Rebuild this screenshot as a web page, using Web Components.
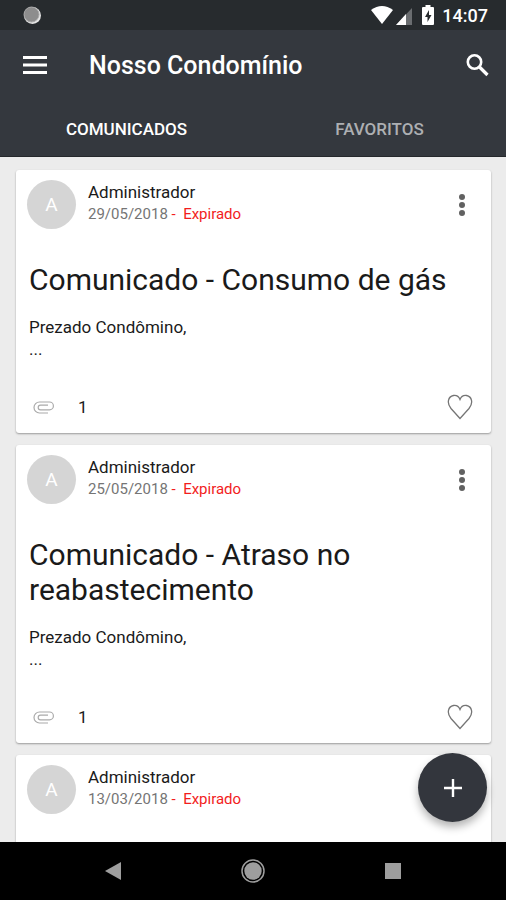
<!DOCTYPE html>
<html lang="pt-BR">
<head>
<meta charset="utf-8">
<meta name="viewport" content="width=device-width, initial-scale=1">
<title>Nosso Condomínio</title>
<style>
  body {
    margin: 0;
    height: 100vh;
    font-family: Roboto, "Liberation Sans", sans-serif;
    color: #1a1a1a;
    background: #ececec;
  }
</style>
</head>
<body>
<app-screen>
  <status-bar slot="top" data-time="14:07"></status-bar>
  <app-bar slot="top" data-header="Nosso Condomínio"></app-bar>
  <tab-bar slot="top" data-tabs="COMUNICADOS,FAVORITOS"></tab-bar>

  <notice-card data-author="Administrador" data-date="29/05/2018" data-status="Expirado" data-files="1">
    <span slot="title">Comunicado - Consumo de gás</span>
    Prezado Condômino,<br>...
  </notice-card>
  <notice-card data-author="Administrador" data-date="25/05/2018" data-status="Expirado" data-files="1">
    <span slot="title">Comunicado - Atraso no reabastecimento</span>
    Prezado Condômino,<br>...
  </notice-card>
  <notice-card data-author="Administrador" data-date="13/03/2018" data-status="Expirado"></notice-card>

  <add-button slot="action"></add-button>
  <nav-bar slot="bottom"></nav-bar>
</app-screen>

<script>
  class BaseElement extends HTMLElement {
    connectedCallback() {
      if (this.shadowRoot) {
        return;
      }

      const template = document.createElement('template');
      template.innerHTML = this.render();
      this.attachShadow({ mode: 'open' }).append(template.content.cloneNode(true));
    }
  }

  const buttonReset = `
    button {
      display: flex;
      align-items: center;
      justify-content: center;
      padding: 0;
      border: 0;
      background: none;
      color: inherit;
      font: inherit;
      cursor: pointer;
    }
    svg { display: block; }
  `;

  class AppScreen extends BaseElement {
    render() {
      return `
        <style>
          :host {
            display: flex;
            flex-direction: column;
            height: 100%;
          }
          main {
            position: relative;
            flex: 1;
            min-height: 0;
          }
          .list {
            box-sizing: border-box;
            display: flex;
            flex-direction: column;
            gap: 12px;
            height: 100%;
            padding: 13px 15px 0 16px;
            overflow: hidden;
          }
          .action {
            position: absolute;
            right: 19px;
            bottom: 20px;
          }
        </style>
        <header><slot name="top"></slot></header>
        <main>
          <div class="list"><slot></slot></div>
          <div class="action"><slot name="action"></slot></div>
        </main>
        <slot name="bottom"></slot>
      `;
    }
  }

  class StatusBar extends BaseElement {
    render() {
      return `
        <style>
          :host {
            display: flex;
            align-items: center;
            height: 30px;
            padding: 0 18px 0 23px;
            background: #272b2e;
            color: #fff;
            font-size: 18px;
            font-weight: 500;
          }
          svg { display: block; }
          .signal { margin-left: auto; }
          .battery { margin: 0 8px 0 9px; }
        </style>
        <svg width="18" height="18" viewBox="0 0 18 18">
          <circle cx="9.500" cy="9.500" r="8.500" fill="#e4e4e4"/>
          <circle cx="8.500" cy="8.500" r="7.500" fill="#8d8d8d" stroke="#a8a8a8"/>
        </svg>
        <svg class="signal" width="42" height="20" viewBox="0 0 42 20">
          <path d="M0 5Q11-3 22 5L11 19Z" fill="#fff"/>
          <path d="M41 3V20H25Z" fill="#6a6d70"/>
          <path d="M35 9V20H25Z" fill="#fff"/>
        </svg>
        <svg class="battery" width="12" height="20" viewBox="0 0 12 20">
          <path d="M3.500 0h5v2H11q1 0 1 1v16q0 1-1 1H1q-1 0-1-1V3q0-1 1-1h2.500Z" fill="#fff"/>
          <path d="M7 5 3 12h2.500v5L9.500 10H7Z" fill="#272b2e"/>
        </svg>
        <time>${this.dataset.time}</time>
      `;
    }
  }

  class AppBar extends BaseElement {
    render() {
      return `
        <style>
          ${buttonReset}
          :host {
            display: flex;
            align-items: center;
            height: 70px;
            padding: 0 17px 0 23px;
            background: #34383e;
            color: #fff;
          }
          h1 {
            flex: 1;
            margin: 0 0 0 42px;
            font-size: 25px;
            font-weight: 500;
          }
        </style>
        <button aria-label="Menu">
          <svg width="24" height="18" viewBox="0 0 24 18" fill="#fff">
            <path d="M0 0h24v3H0zM0 7.500h24v3H0zM0 15h24v3H0z"/>
          </svg>
        </button>
        <h1>${this.dataset.header}</h1>
        <button aria-label="Buscar">
          <svg width="23" height="23" viewBox="0 0 23 23" fill="none" stroke="#fff" stroke-width="2.600">
            <circle cx="8.500" cy="8" r="6.700"/>
            <path d="M13.500 13 21.500 21" stroke-width="3.200"/>
          </svg>
        </button>
      `;
    }
  }

  class TabBar extends BaseElement {
    render() {
      const tabs = this.dataset.tabs.split(',');
      return `
        <style>
          ${buttonReset}
          :host {
            display: block;
            background: #34383e;
            border-bottom: 1px solid #25282c;
          }
          div { display: flex; }
          button {
            flex: 1;
            height: 56px;
            padding-top: 2px;
            color: #adafb2;
            font-size: 17px;
            font-weight: 500;
          }
          button[aria-selected="true"] { color: #fff; }
        </style>
        <div role="tablist">
          ${tabs.map((tab, i) => `<button role="tab" aria-selected="${i === 0}">${tab}</button>`).join('')}
        </div>
      `;
    }
  }

  class NoticeCard extends BaseElement {
    render() {
      const { author, date, status, files } = this.dataset;
      const content = `
        <h2><slot name="title"></slot></h2>
        <div class="text"><slot></slot></div>
        <footer>
          <svg width="21" height="13" viewBox="0 0 21 13" fill="none" stroke="#aaa" stroke-width="1.200">
            <path d="M15 12H6.500a5.500 5.500 0 0 1 0-11H16.500a3.900 3.900 0 0 1 0 7.800H7.500a2.300 2.300 0 0 1 0-4.600H15"/>
          </svg>
          <span>${files}</span>
          <button aria-label="Favoritar">
            <svg width="26" height="26" viewBox="0 0 26 26" fill="none" stroke="#757575" stroke-width="1.300">
              <path d="M13 24.500 4 14.500C-.5 9 1 2.500 6.500 1.500 10 1 12 3 13 5.500 14 3 16 1 19.500 1.500 25 2.500 26.500 9 22 14.500Z"/>
            </svg>
          </button>
        </footer>
      `;
      return `
        <style>
          ${buttonReset}
          :host {
            display: block;
            flex: none;
            min-height: 263px;
            border-radius: 3px;
            background: #fff;
            box-shadow: 0 1px 2px rgba(0, 0, 0, 0.35);
          }
          header {
            display: flex;
            align-items: center;
            gap: 12px;
            padding: 10px 25px 0 11px;
          }
          .avatar {
            display: grid;
            place-items: center;
            width: 49px;
            height: 49px;
            border-radius: 50%;
            background: #d5d5d5;
            color: #fff;
            font-size: 19px;
          }
          .meta {
            flex: 1;
            height: 47px;
            font-size: 17px;
            line-height: 22px;
          }
          .date {
            color: #757575;
            font-size: 15px;
          }
          .status {
            color: #f21d1d;
            white-space: pre;
          }
          h2 {
            margin: 33px 13px 19px;
            font-size: 30px;
            font-weight: 400;
            line-height: 35px;
          }
          .text {
            margin: 0 13px 21px;
            font-size: 17px;
            line-height: 22px;
          }
          footer {
            display: flex;
            align-items: center;
            gap: 24px;
            height: 52px;
            padding: 0 18px 0 17px;
            font-size: 17px;
          }
          footer button { margin-left: auto; }
        </style>
        <article>
          <header>
            <div class="avatar">${author[0]}</div>
            <div class="meta">
              <div>${author}</div>
              <div class="date">${date}<span class="status"> -  ${status}</span></div>
            </div>
            ${files ? `<button aria-label="Opções">
              <svg width="8" height="24" viewBox="0 0 8 24" fill="#616161">
                <circle cx="4" cy="4" r="3"/><circle cx="4" cy="12" r="3"/><circle cx="4" cy="20" r="3"/>
              </svg>
            </button>` : ''}
          </header>
          ${files ? content : ''}
        </article>
      `;
    }
  }

  class AddButton extends BaseElement {
    render() {
      return `
        <style>
          ${buttonReset}
          :host { display: block; }
          button {
            width: 69px;
            height: 69px;
            border-radius: 50%;
            background: #33363d;
            box-shadow: 0 5px 9px rgba(0, 0, 0, 0.3);
          }
        </style>
        <button aria-label="Adicionar">
          <svg width="18" height="18" viewBox="0 0 18 18" fill="none" stroke="#fff" stroke-width="2.400">
            <path d="M9 0v18M0 9h18"/>
          </svg>
        </button>
      `;
    }
  }

  class NavBar extends BaseElement {
    render() {
      return `
        <style>
          ${buttonReset}
          :host {
            display: block;
            background: #000;
          }
          nav {
            display: grid;
            grid-template-columns: repeat(3, 140px);
            justify-content: center;
            height: 58px;
          }
        </style>
        <nav>
          <button aria-label="Voltar">
            <svg width="16" height="18" viewBox="0 0 16 18" fill="#9e9e9e"><path d="M16 0v18L0 9Z"/></svg>
          </button>
          <button aria-label="Início">
            <svg width="24" height="24" viewBox="0 0 24 24">
              <circle cx="12" cy="12" r="11" fill="none" stroke="#9e9e9e" stroke-width="1.500"/>
              <circle cx="12" cy="12" r="8.700" fill="#9e9e9e"/>
            </svg>
          </button>
          <button aria-label="Recentes">
            <svg width="16" height="16" viewBox="0 0 16 16"><path d="M0 0h16v16H0z" fill="#9e9e9e"/></svg>
          </button>
        </nav>
      `;
    }
  }

  customElements.define('app-screen', AppScreen);
  customElements.define('status-bar', StatusBar);
  customElements.define('app-bar', AppBar);
  customElements.define('tab-bar', TabBar);
  customElements.define('notice-card', NoticeCard);
  customElements.define('add-button', AddButton);
  customElements.define('nav-bar', NavBar);
</script>
</body>
</html>
